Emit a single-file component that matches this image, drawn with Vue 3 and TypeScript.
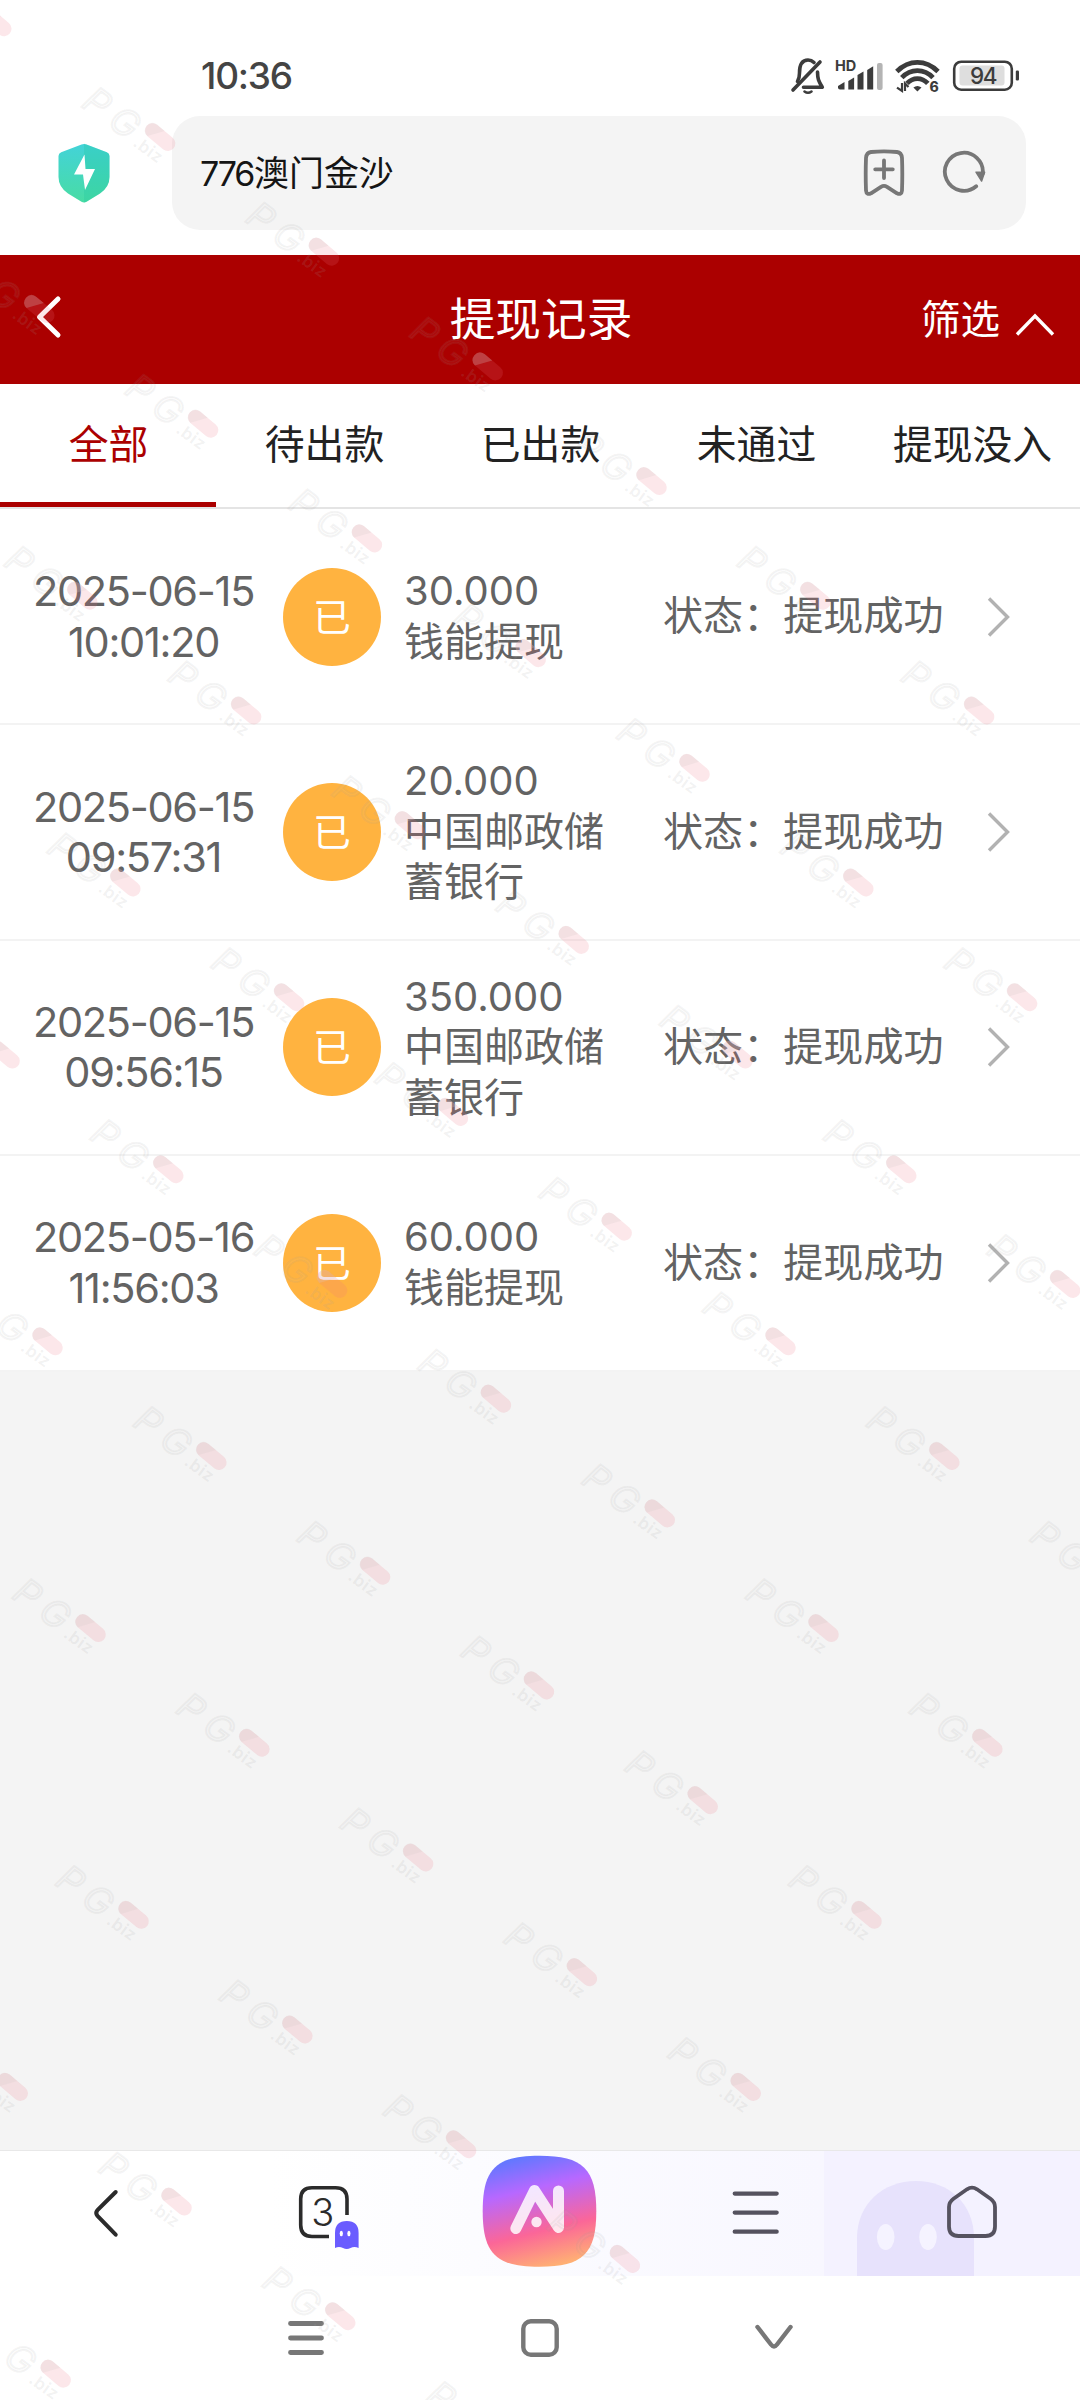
<script setup lang="ts">
interface WithdrawRecord {
  date: string
  time: string
  amount: string
  channel: string
  status: string
}

interface Mark {
  x: number
  y: number
}

const tabs: string[] = ['全部', '待出款', '已出款', '未通过', '提现没入']
const activeTab = 0

const records: WithdrawRecord[] = [
  { date: '2025-06-15', time: '10:01:20', amount: '30.000', channel: '钱能提现', status: '提现成功' },
  { date: '2025-06-15', time: '09:57:31', amount: '20.000', channel: '中国邮政储蓄银行', status: '提现成功' },
  { date: '2025-06-15', time: '09:56:15', amount: '350.000', channel: '中国邮政储蓄银行', status: '提现成功' },
  { date: '2025-05-16', time: '11:56:03', amount: '60.000', channel: '钱能提现', status: '提现成功' },
]

// The top-right and bottom-right corners of the screen carry no stamps.
function isClear(x: number, y: number): boolean {
  return (y < 240 && x > 330) || (y < 520 && x > 680) || (y > 1800 && x > 820) || (y > 2200 && x > 600)
}

// Watermark stamps sit on a skewed lattice that covers the rest of the screen.
const marks: Mark[] = []
for (let a = -16; a <= 16; a++) {
  for (let b = -16; b <= 16; b++) {
    const x = 150 + a * 163.8 + b * 284.6
    const y = 1407.8 + a * 114.7 - b * 57.35
    if (x > -74 && x < 1075 && y > -60 && y < 2395 && !isClear(x, y)) marks.push({ x, y })
  }
}
</script>

<template>
  <div class="screen">
    <div class="status-bar">
      <span class="clock">10:36</span>
      <svg class="status-icons" width="232" height="44" viewBox="790 52 232 44" fill="none">
        <g stroke="#3c3c3c" stroke-width="3.6" stroke-linecap="round" stroke-linejoin="round">
          <path d="M820 62L793 90" />
          <path d="M797.5 81.500C799 79 799.500 77 799.500 73C799.500 64.500 802.500 60 808 60C810.500 60 812.500 61 814 62.500" />
          <path d="M817.500 72C817.600 79 818.500 81 822.300 87.300H803.500" />
          <path d="M804.500 91.500Q808 94 811.500 91.500" stroke-width="2.600" />
        </g>
        <text x="835" y="71.200" class="hd">HD</text>
        <g fill="#3c3c3c">
          <path d="M838 86l6.500-4v7.500h-4.500q-2 0-2-2z" />
          <path d="M848.300 81l5.800-3.500V89.500h-5.800z" />
          <path d="M857.500 75l6-3.500V89.500h-6z" />
          <path d="M867.200 70l6-3.700V89.500h-6z" />
          <rect x="877" y="63" width="5.600" height="27" rx="2" fill="#b4b4b4" />
        </g>
        <g stroke="#3c3c3c" stroke-width="4.800">
          <path d="M896.800 71.500Q906 62.400 917.400 62.400T938 71.500" />
          <path d="M901.800 77.600Q908.500 70.600 917.400 70.600T933 77.600" />
          <path d="M907 83.400Q911.500 78.600 917.400 78.600T927.800 83.400" />
        </g>
        <path d="M913.400 87.500Q917.400 84.500 921.500 87.500L917.400 91.500Z" fill="#3c3c3c" />
        <path d="M902 83V91L897 87.600M905 91V83.500L908.500 87" stroke="#3c3c3c" stroke-width="2.200" />
        <text x="929.500" y="91.800" class="wifi-gen">6</text>
        <rect x="954.200" y="61.700" width="57.600" height="28" rx="7" stroke="#3c3c3c" stroke-width="2.600" />
        <rect x="959.500" y="65.500" width="45" height="20" rx="3" fill="#dedede" />
        <rect x="1015.800" y="70.500" width="3.200" height="10" rx="1.200" fill="#3c3c3c" />
        <text x="983" y="83.500" class="level" text-anchor="middle">94</text>
      </svg>
    </div>

    <div class="address-row">
      <svg class="shield" width="52" height="60" viewBox="0 0 52 60">
        <defs>
          <linearGradient id="shieldFill" x1="0" y1="0" x2="0" y2="1">
            <stop offset="0" stop-color="#43d3d8" />
            <stop offset="1" stop-color="#48dca4" />
          </linearGradient>
        </defs>
        <path d="M23.500 1.600Q26 .4 28.500 1.600L48.800 9.200Q51.500 10.200 51.500 13V34Q51.500 44 42 50.500L28.500 58.800Q26 60 23.500 58.800L10 50.500Q.5 44 .5 34V13Q.5 10.200 3.200 9.200Z" fill="url(#shieldFill)" />
        <path d="M26 .8Q27.500 1 28.500 1.600L48.800 9.200Q51.500 10.200 51.500 13V34Q51.500 44 42 50.500L28.500 58.800Q27 59.600 26 59.600Z" fill="#1fc49f" opacity=".28" />
        <path d="M26.500 11.500L16 31.500H25L27 47L37 26H27.500Z" fill="#fff" />
      </svg>
      <div class="address">
        <span class="address-text"><span class="num">776</span>澳门金沙</span>
        <svg class="bookmark" width="42" height="48" viewBox="0 0 42 48" fill="none" stroke="#777" stroke-width="3.800" stroke-linecap="round" stroke-linejoin="round">
          <path d="M8 3Q21 1.800 34 3Q38.500 3.500 39 9Q39.600 25 39 41.500Q38.500 46.500 34 44.300L24 37.800Q21 36 18 37.800L8 44.300Q3.500 46.500 3 41.500Q2.400 25 3 9Q3.500 3.500 8 3Z" />
          <path d="M21 11.500V29M12.200 20.300H29.800" />
        </svg>
        <svg class="refresh" width="46" height="46" viewBox="0 0 46 46" fill="none">
          <path d="M35.200 36.200A19 19 0 1 1 41.800 23.500" stroke="#777" stroke-width="3.800" stroke-linecap="round" />
          <path d="M35 22.200H43.600L40.600 31Z" fill="#777" stroke="#777" stroke-width="1.500" stroke-linejoin="round" />
        </svg>
      </div>
    </div>

    <header class="page-head">
      <svg class="back" width="30" height="46" viewBox="0 0 30 46" fill="none" stroke="#fff" stroke-width="5" stroke-linecap="round" stroke-linejoin="round">
        <path d="M24 5L5.500 23L24 41" />
      </svg>
      <h1>提现记录</h1>
      <div class="filter">
        <span>筛选</span>
        <svg width="40" height="26" viewBox="0 0 40 26" fill="none" stroke="#fff" stroke-width="3.400">
          <path d="M2 22.500L20 4L38 22.500" />
        </svg>
      </div>
    </header>

    <nav class="tabs">
      <div v-for="(tab, i) in tabs" :key="tab" class="tab" :class="{ active: i === activeTab }">{{ tab }}</div>
    </nav>

    <main class="list">
      <div v-for="r in records" :key="r.date + r.time" class="row">
        <div class="when">
          <div>{{ r.date }}</div>
          <div>{{ r.time }}</div>
        </div>
        <div class="badge">已</div>
        <div class="detail">
          <div>{{ r.amount }}</div>
          <div>{{ r.channel }}</div>
        </div>
        <div class="state">状态：{{ r.status }}</div>
        <svg class="chev" width="24" height="42" viewBox="0 0 24 42" fill="none" stroke="#b2b2b2" stroke-width="3.400">
          <path d="M2 2.500L20.500 21L2 39.500" />
        </svg>
      </div>
    </main>

    <div class="spacer"></div>

    <footer class="toolbar">
      <svg width="1080" height="126" viewBox="0 2150 1080 126" fill="none">
        <defs>
          <linearGradient id="barTint" x1="0" y1="0" x2="1" y2="0">
            <stop offset=".25" stop-color="#fff" />
            <stop offset=".5" stop-color="#fbfbff" />
            <stop offset=".76" stop-color="#f8f7ff" />
          </linearGradient>
          <linearGradient id="aiFill" x1=".35" y1="0" x2=".6" y2="1">
            <stop offset="0" stop-color="#5f78ff" />
            <stop offset=".3" stop-color="#b768ff" />
            <stop offset=".68" stop-color="#fb6698" />
            <stop offset="1" stop-color="#ffb074" />
          </linearGradient>
        </defs>
        <rect y="2151" width="1080" height="125" fill="url(#barTint)" />
        <rect x="824" y="2151" width="256" height="125" fill="#f4f2ff" />
        <path d="M857 2276V2238C857 2204 883 2181 916 2181S974 2204 974 2238V2276Z" fill="#e7e2fc" />
        <ellipse cx="885.700" cy="2237" rx="8.800" ry="13" fill="#f5f3ff" />
        <ellipse cx="928" cy="2237" rx="8.800" ry="13" fill="#f5f3ff" />
        <path d="M115.700 2192L97.500 2210Q95 2213 97.500 2216L115.700 2234.700" stroke="#2b2b2b" stroke-width="4" stroke-linecap="round" />
        <path d="M347 2215V2199Q347 2187.700 335.500 2187.700H312Q300.700 2187.700 300.700 2199V2225Q300.700 2236.500 312 2236.500H329" stroke="#2b2b2b" stroke-width="3.600" />
        <text x="322.700" y="2225.500" class="tab-count" text-anchor="middle">3</text>
        <path d="M335 2248V2233Q335 2221 346.800 2221T358.600 2233V2248Q354.500 2246 350.500 2248Q346.800 2249.800 343 2248Q339 2246 335 2248Z" fill="#6a5cff" />
        <ellipse cx="341.300" cy="2233.500" rx="1.600" ry="2.700" fill="#fff" />
        <ellipse cx="348.900" cy="2233.500" rx="1.600" ry="2.700" fill="#fff" />
        <path d="M539.500 2155.700C583 2155.700 596.300 2169 596.300 2211.200S583 2266.700 539.500 2266.700S482.700 2253.500 482.700 2211.200S496 2155.700 539.500 2155.700Z" fill="url(#aiFill)" />
        <path d="M515.800 2228.500L534.500 2190.500L558.500 2227.500V2191" stroke="#fff" stroke-opacity=".84" stroke-width="11" stroke-linecap="round" stroke-linejoin="round" />
        <circle cx="536.500" cy="2222" r="5.200" fill="#fff" fill-opacity=".84" />
        <path d="M734.700 2193.600H776.700M734.700 2212.600H776.700M734.700 2231.700H776.700" stroke="#55525f" stroke-width="4.200" stroke-linecap="round" />
        <path d="M967 2189.300Q972 2186 977 2189.300L990.500 2198.700Q995 2202 995 2207V2226.500Q995 2236 985.500 2236H958.500Q949 2236 949 2226.500V2207Q949 2202 953.500 2198.700Z" stroke="#55525f" stroke-width="3.800" />
      </svg>
    </footer>

    <div class="system-nav">
      <svg width="36" height="36" viewBox="0 0 36 36" stroke="#777" stroke-width="4.800" stroke-linecap="round">
        <path d="M2.500 3.500H33.500M2.500 18H33.500M2.500 32.500H33.500" />
      </svg>
      <svg width="38" height="38" viewBox="0 0 38 38" fill="none" stroke="#777" stroke-width="4.400">
        <rect x="2.300" y="2.300" width="33.400" height="33.400" rx="7.500" />
      </svg>
      <svg width="38" height="28" viewBox="0 0 38 28" fill="none" stroke="#777" stroke-width="4.400" stroke-linecap="round">
        <path d="M2.500 3L16 20.500Q19 24.500 22 20.500L35.500 3" />
      </svg>
    </div>

    <svg class="watermark" width="1080" height="2400" viewBox="0 0 1080 2400">
      <g v-for="(m, i) in marks" :key="i" :transform="`translate(${m.x} ${m.y})`">
        <g transform="rotate(36)">
          <text v-if="m.x > -5" class="mark-letter" x="-5" y="25">P</text>
          <text v-if="m.x > -38 && m.x < 1060 && m.y < 2370" class="mark-letter" x="27" y="25">G</text>
          <text v-if="m.x > -50 && m.x < 1030 && m.y > -40 && m.y < 2340" class="mark-suffix" x="60" y="26">.biz</text>
        </g>
        <g transform="translate(61 48) rotate(40)">
          <rect class="mark-pill" x="-17" y="-7.500" width="35" height="15" rx="7.500" />
          <path class="mark-cap" d="M-10 -7.500Q-17 -7 -17 0T-10 7.500L0 -7.500Z" />
        </g>
      </g>
    </svg>
  </div>
</template>

<style>
body {
  background: #fff;
}
</style>

<style scoped>
.screen {
  position: relative;
  width: 1080px;
  height: 2400px;
  overflow: hidden;
  display: flex;
  flex-direction: column;
  background: #fff;
  font-family: Inter, 'Noto Sans CJK SC', sans-serif;
  color: #636363;
}
.status-bar {
  height: 116px;
  box-sizing: border-box;
  padding: 52px 58px 0 201px;
  display: flex;
  justify-content: space-between;
  align-items: flex-start;
}
.clock {
  font-size: 37px;
  line-height: 48px;
  font-weight: 500;
  letter-spacing: -1.2px;
  color: #444;
}
.hd {
  font: 700 14.5px Inter, sans-serif;
  fill: #3c3c3c;
}
.wifi-gen {
  font: 800 14px Inter, sans-serif;
  fill: #3c3c3c;
}
.level {
  font: 500 22.5px Inter, sans-serif;
  letter-spacing: -1.5px;
  fill: #3c3c3c;
}
.address-row {
  height: 139px;
  display: flex;
  align-items: flex-start;
}
.shield {
  margin: 27px 62px 0 58px;
}
.address {
  width: 854px;
  height: 114px;
  box-sizing: border-box;
  padding: 0 39px 0 28px;
  border-radius: 28px;
  background: #f4f4f4;
  display: flex;
  align-items: center;
}
.address-text {
  flex: 1;
  font-size: 34.9px;
  line-height: 50px;
  color: #151515;
}
.num {
  font-size: 34px;
  letter-spacing: -2.200px;
  margin-right: 1px;
}
.bookmark {
  margin-right: 36px;
}
.page-head {
  height: 129px;
  background: #ab0000;
  color: #fff;
  display: grid;
  grid-template-columns: 301px 1fr 299px;
  align-items: center;
}
.back {
  margin-left: 34px;
  margin-top: -5px;
}
h1 {
  margin: 0;
  font-size: 45.7px;
  line-height: 60px;
  font-weight: 400;
  text-align: center;
}
.filter {
  display: flex;
  align-items: center;
  justify-content: flex-end;
  gap: 15px;
  padding-right: 25px;
  font-size: 39.5px;
  line-height: 56px;
}
.filter svg {
  margin-top: 10px;
}
.tabs {
  height: 125px;
  box-sizing: border-box;
  border-bottom: 2px solid #e4e4e4;
  display: flex;
}
.tab {
  width: 216px;
  height: 123px;
  box-sizing: border-box;
  border-bottom: 5px solid transparent;
  font-size: 39.8px;
  line-height: 122px;
  padding-left: 1px;
  text-align: center;
  white-space: nowrap;
  color: #222;
}
.tab.active {
  color: #ab0000;
  border-bottom-color: #ab0000;
}
.list {
  padding-top: 1px;
}
.row {
  height: 215.400px;
  box-sizing: border-box;
  border-bottom: 2px solid #f3f3f3;
  display: flex;
  align-items: center;
  font-size: 40px;
  line-height: 50.500px;
}
.when {
  width: 283px;
  padding-left: 4px;
  text-align: center;
  font-size: 41.500px;
  letter-spacing: -1.300px;
  box-sizing: border-box;
}
.badge {
  width: 98px;
  height: 98px;
  border-radius: 50%;
  background: #ffb340;
  color: #fff;
  font-size: 37.800px;
  line-height: 99px;
  text-align: center;
}
.detail {
  width: 205px;
  margin-left: 23px;
  word-break: break-all;
}
.state {
  margin-left: 54px;
  width: 324px;
  font-size: 40.100px;
  white-space: nowrap;
}
.spacer {
  flex: 1;
  background: #f4f4f4;
}
.toolbar {
  height: 126px;
  border-top: 2px solid #e8e8e8;
  box-sizing: border-box;
  display: flex;
  align-items: flex-end;
}
.toolbar svg {
  flex: none;
}
.tab-count {
  font: 300 38px Inter, sans-serif;
  fill: #2b2b2b;
}
.system-nav {
  height: 124px;
  display: flex;
  justify-content: space-between;
  align-items: center;
  padding: 0 287px 0 288px;
}
.watermark {
  position: absolute;
  left: 0;
  top: 0;
  pointer-events: none;
}
.mark-letter {
  font: italic 400 37px Inter, sans-serif;
  fill: rgba(200, 200, 200, 0.06);
  stroke: rgba(150, 150, 150, 0.11);
  stroke-width: 1.800px;
}
.mark-suffix {
  font: 600 17px Inter, sans-serif;
  letter-spacing: 0.5px;
  fill: rgba(160, 160, 160, 0.15);
}
.mark-pill {
  fill: rgba(238, 110, 130, 0.17);
}
.mark-cap {
  fill: rgba(215, 205, 205, 0.25);
}
</style>
